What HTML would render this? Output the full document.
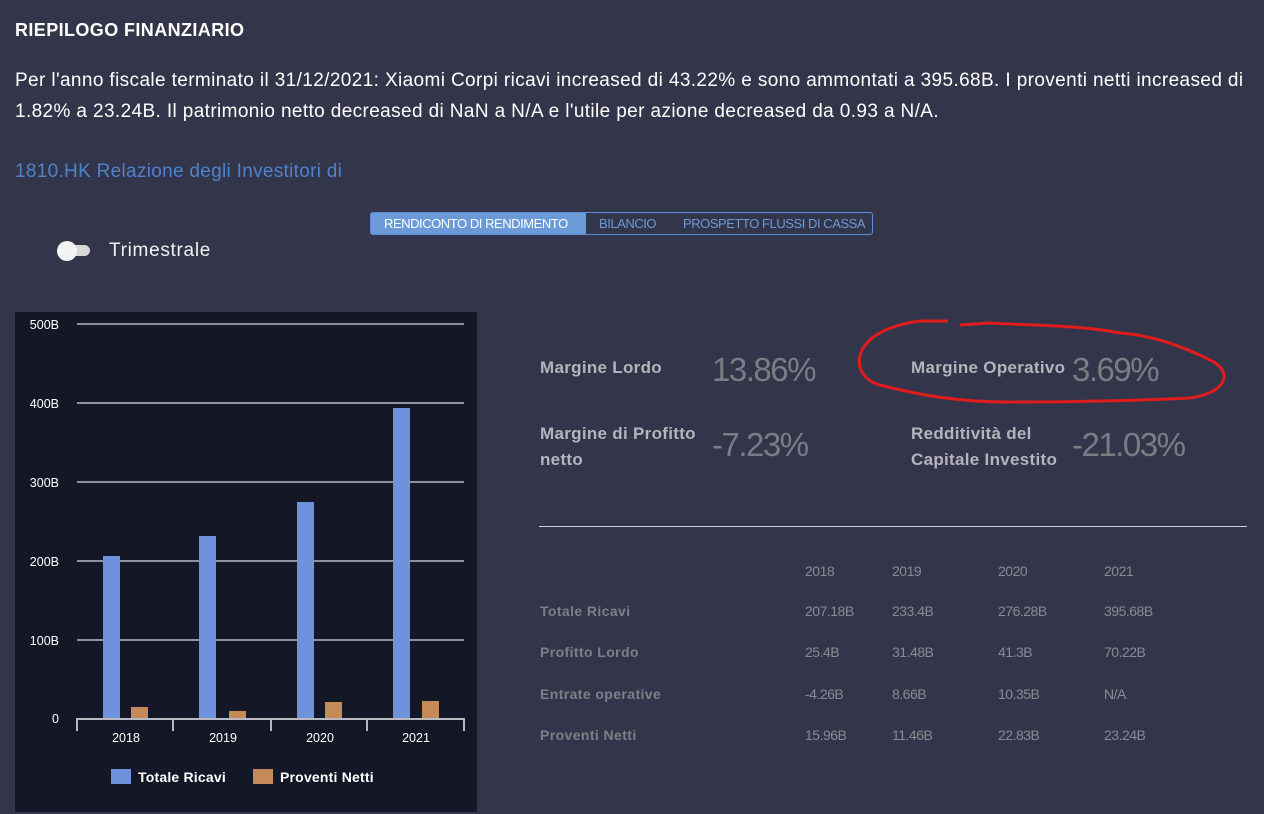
<!DOCTYPE html>
<html><head><meta charset="utf-8"><style>
*{margin:0;padding:0;box-sizing:border-box}
body{width:1264px;height:814px;background:#33354a;font-family:"Liberation Sans",sans-serif;color:#fff;position:relative;overflow:hidden}
.a{position:absolute;white-space:nowrap}
.lab{font-weight:bold;color:#b4b4bc;font-size:17px;letter-spacing:0.3px}
.big{font-size:33px;color:#7c7c84;letter-spacing:-1.5px}
.tb{font-size:14px;color:#8a8a92;letter-spacing:-0.5px}
.tl{font-size:14px;color:#7f7f88;font-weight:bold;letter-spacing:0.4px}
</style></head><body>
<div class="a" style="left:15px;top:20px;font-size:18px;font-weight:bold;letter-spacing:0.4px">RIEPILOGO FINANZIARIO</div>
<div class="a" style="left:15px;top:70px;font-size:19px;letter-spacing:0.38px">Per l'anno fiscale terminato il 31/12/2021: Xiaomi Corpi ricavi increased di 43.22% e sono ammontati a 395.68B. I proventi netti increased di</div>
<div class="a" style="left:15px;top:101px;font-size:19px;letter-spacing:0.38px">1.82% a 23.24B. Il patrimonio netto decreased di NaN a N/A e l'utile per azione decreased da 0.93 a N/A.</div>
<div class="a" style="left:15px;top:161px;font-size:19px;letter-spacing:0.3px;color:#4f82cc">1810.HK Relazione degli Investitori di</div>

<div class="a" style="left:370px;top:212px;width:503px;height:23px;border:1px solid #5a8fd8;border-radius:3px;font-size:13px;letter-spacing:-0.45px">
<div class="a" style="left:0;top:0;width:215px;height:21px;background:#6a9ad8;color:#fff;line-height:21px;padding-left:13px">RENDICONTO DI RENDIMENTO</div>
<div class="a" style="left:228px;top:0;line-height:21px;color:#6a9ad8">BILANCIO</div>
<div class="a" style="left:312px;top:0;line-height:21px;color:#6a9ad8">PROSPETTO FLUSSI DI CASSA</div>
</div>
<div class="a" style="left:60px;top:245px;width:30px;height:11px;border-radius:6px;background:#d8d8d8"></div>
<div class="a" style="left:57px;top:241px;width:20px;height:20px;border-radius:50%;background:#f4f4f4"></div>
<div class="a" style="left:109px;top:240px;font-size:19px;letter-spacing:0.7px;color:#f2f2f2">Trimestrale</div>

<svg class="a" style="left:15px;top:312px" width="462" height="500" viewBox="15 312 462 500">
<rect x="15" y="312" width="462" height="500" fill="#141726"/>
<g stroke="#b8b8c0" stroke-width="1.5">
<line x1="77" y1="324" x2="464" y2="324"/><line x1="77" y1="403" x2="464" y2="403"/><line x1="77" y1="482" x2="464" y2="482"/><line x1="77" y1="561" x2="464" y2="561"/><line x1="77" y1="640" x2="464" y2="640"/>
</g>
<g fill="#6e93dc"><rect x="103" y="556" width="17" height="162"/><rect x="199" y="536" width="17" height="182"/><rect x="297" y="502" width="17" height="216"/><rect x="393" y="408" width="17" height="310"/></g>
<g fill="#c68a58"><rect x="131" y="707" width="17" height="11"/><rect x="229" y="711" width="17" height="7"/><rect x="325" y="702" width="17" height="16"/><rect x="422" y="701" width="17" height="17"/></g>
<g stroke="#b8b8c0" stroke-width="2" fill="none"><line x1="77" y1="719" x2="465" y2="719"/><line x1="77" y1="718" x2="77" y2="731"/><line x1="173" y1="718" x2="173" y2="731"/><line x1="271" y1="718" x2="271" y2="731"/><line x1="367" y1="718" x2="367" y2="731"/><line x1="464" y1="718" x2="464" y2="731"/></g>
<g font-family="Liberation Sans" font-size="12.5" fill="#fff" text-anchor="end"><text x="59" y="329">500B</text><text x="59" y="408">400B</text><text x="59" y="487">300B</text><text x="59" y="566">200B</text><text x="59" y="645">100B</text><text x="59" y="723">0</text></g>
<g font-family="Liberation Sans" font-size="12.5" fill="#fff" text-anchor="middle"><text x="126" y="742">2018</text><text x="223" y="742">2019</text><text x="320" y="742">2020</text><text x="416" y="742">2021</text></g>
<rect x="111" y="769" width="20" height="15" fill="#6e93dc"/><rect x="253" y="769" width="20" height="15" fill="#c68a58"/>
<g font-family="Liberation Sans" font-size="14" font-weight="bold" fill="#fff" letter-spacing="0.2"><text x="138" y="782">Totale Ricavi</text><text x="280" y="782">Proventi Netti</text></g>
</svg>

<div class="a lab" style="left:540px;top:358px">Margine Lordo</div>
<div class="a big" style="left:712px;top:351px">13.86%</div>
<div class="a lab" style="left:911px;top:358px">Margine Operativo</div>
<div class="a big" style="left:1072px;top:351px">3.69%</div>
<div class="a lab" style="left:540px;top:421px;line-height:26px">Margine di Profitto<br>netto</div>
<div class="a big" style="left:712px;top:426px">-7.23%</div>
<div class="a lab" style="left:911px;top:421px;line-height:26px">Redditività del<br>Capitale Investito</div>
<div class="a big" style="left:1072px;top:426px">-21.03%</div>
<svg class="a" style="left:0;top:0" width="1264" height="814"><path d="M948 321 L920 321 C890 325 870 335 862 350 C855 365 862 380 880 385 C920 395 960 403 1020 402 C1080 402 1150 400 1190 398 C1230 392 1232 370 1210 360 C1180 345 1150 335 1120 333 C1080 325 1020 325 990 323 L960 325" fill="none" stroke="#e01c1c" stroke-width="3"/></svg>

<div class="a" style="left:539px;top:526px;width:708px;height:1px;background:#d0d0d8"></div>
<div class="a tb" style="left:805px;top:563px">2018</div><div class="a tb" style="left:892px;top:563px">2019</div><div class="a tb" style="left:998px;top:563px">2020</div><div class="a tb" style="left:1104px;top:563px">2021</div>
<div class="a tl" style="left:540px;top:603px">Totale Ricavi</div>
<div class="a tb" style="left:805px;top:603px">207.18B</div><div class="a tb" style="left:892px;top:603px">233.4B</div><div class="a tb" style="left:998px;top:603px">276.28B</div><div class="a tb" style="left:1104px;top:603px">395.68B</div>
<div class="a tl" style="left:540px;top:644px">Profitto Lordo</div>
<div class="a tb" style="left:805px;top:644px">25.4B</div><div class="a tb" style="left:892px;top:644px">31.48B</div><div class="a tb" style="left:998px;top:644px">41.3B</div><div class="a tb" style="left:1104px;top:644px">70.22B</div>
<div class="a tl" style="left:540px;top:686px">Entrate operative</div>
<div class="a tb" style="left:805px;top:686px">-4.26B</div><div class="a tb" style="left:892px;top:686px">8.66B</div><div class="a tb" style="left:998px;top:686px">10.35B</div><div class="a tb" style="left:1104px;top:686px">N/A</div>
<div class="a tl" style="left:540px;top:727px">Proventi Netti</div>
<div class="a tb" style="left:805px;top:727px">15.96B</div><div class="a tb" style="left:892px;top:727px">11.46B</div><div class="a tb" style="left:998px;top:727px">22.83B</div><div class="a tb" style="left:1104px;top:727px">23.24B</div>
</body></html>
